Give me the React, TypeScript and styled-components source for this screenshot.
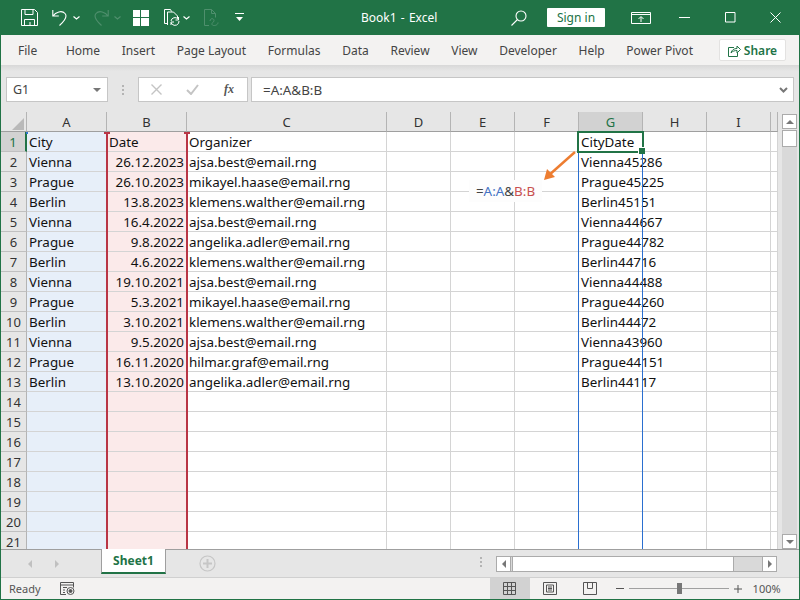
import React, { FC } from "react";
import styled, { createGlobalStyle } from "styled-components";

const GREEN = "#217346";

const GlobalStyle = createGlobalStyle`
  html, body { margin: 0; padding: 0; background: #fff; }
  * { box-sizing: border-box; }
  body { font-family: "Noto Sans", "Open Sans", sans-serif; }
`;

const rows: [string, string, string, string][] = [
  ["Vienna", "26.12.2023", "ajsa.best@email.rng", "Vienna45286"],
  ["Prague", "26.10.2023", "mikayel.haase@email.rng", "Prague45225"],
  ["Berlin", "13.8.2023", "klemens.walther@email.rng", "Berlin45151"],
  ["Vienna", "16.4.2022", "ajsa.best@email.rng", "Vienna44667"],
  ["Prague", "9.8.2022", "angelika.adler@email.rng", "Prague44782"],
  ["Berlin", "4.6.2022", "klemens.walther@email.rng", "Berlin44716"],
  ["Vienna", "19.10.2021", "ajsa.best@email.rng", "Vienna44488"],
  ["Prague", "5.3.2021", "mikayel.haase@email.rng", "Prague44260"],
  ["Berlin", "3.10.2021", "klemens.walther@email.rng", "Berlin44472"],
  ["Vienna", "9.5.2020", "ajsa.best@email.rng", "Vienna43960"],
  ["Prague", "16.11.2020", "hilmar.graf@email.rng", "Prague44151"],
  ["Berlin", "13.10.2020", "angelika.adler@email.rng", "Berlin44117"],
];

const columns = ["A", "B", "C", "D", "E", "F", "G", "H", "I", ""];
const tabs = ["Home", "Insert", "Page Layout", "Formulas", "Data", "Review", "View", "Developer", "Help", "Power Pivot"];

const Window = styled.div`
  width: 800px;
  height: 600px;
  display: flex;
  flex-direction: column;
  border: 1px solid ${GREEN};
  border-top: none;
  background: #e6e6e6;
  overflow: hidden;
`;

const TitleBar = styled.header`
  height: 35px;
  flex: none;
  display: flex;
  align-items: center;
  background: ${GREEN};
  color: #fff;
  position: relative;
  padding-left: 20px;
`;

const Slot = styled.span<{ $left?: number }>`
  display: inline-flex;
  align-items: center;
  flex: none;
  margin-left: ${(p) => p.$left ?? 0}px;
`;

const Title = styled.div`
  position: absolute;
  left: 360px;
  top: 9px;
  font-size: 12px;
  line-height: 17px;
  word-spacing: -1px;
  white-space: pre;
`;

const SignIn = styled.button`
  width: 58px;
  height: 19px;
  margin-left: 20px;
  padding: 0;
  border: none;
  border-radius: 1px;
  background: #fff;
  color: ${GREEN};
  font: 12px/19px "Noto Sans", sans-serif;
`;

const TabBar = styled.nav`
  height: 30px;
  flex: none;
  display: flex;
  align-items: center;
  gap: 21.7px;
  padding-left: 17px;
  background: #f3f2f1;
  color: #444;
  font-size: 12px;
`;

const Tab = styled.span<{ $file?: boolean }>`
  margin-right: ${(p) => (p.$file ? 7 : 0)}px;
  white-space: nowrap;
`;

const ShareButton = styled.button`
  position: absolute;
  left: 719px;
  top: 39px;
  width: 67px;
  height: 22px;
  display: flex;
  align-items: center;
  justify-content: center;
  gap: 3px;
  padding: 0;
  background: #fff;
  border: 1px solid #e3e2e1;
  border-radius: 2px;
  color: ${GREEN};
  font: 600 12px "Noto Sans", sans-serif;
`;

const FormulaBand = styled.div`
  height: 47px;
  flex: none;
  display: flex;
  align-items: flex-start;
  padding: 12px 5px 0 5px;
  background: linear-gradient(#d8d8d8, #e6e6e6 6px);
`;

const NameBox = styled.div`
  width: 102px;
  height: 25px;
  display: flex;
  align-items: center;
  justify-content: space-between;
  padding: 0 6px 0 6px;
  background: #fff;
  border: 1px solid #c6c6c6;
  color: #444;
  font-size: 12.500px;
`;

const Grip = styled.div`
  width: 2px;
  height: 10px;
  margin: 8px 14px 0 14px;
  background: repeating-linear-gradient(#b4b4b4 0 2px, transparent 2px 4px);
`;

const FormulaButtons = styled.div`
  width: 110px;
  height: 25px;
  display: flex;
  align-items: center;
  padding-left: 12px;
  background: #fff;
  border: 1px solid #c6c6c6;
`;

const FxLabel = styled.span`
  margin-left: 25px;
  color: #555;
  font: italic 700 12px "Liberation Serif", serif;
`;

const FormulaInput = styled.div`
  width: 543px;
  height: 25px;
  margin-left: 3px;
  display: flex;
  align-items: center;
  justify-content: space-between;
  padding: 0 5px 0 11px;
  background: #fff;
  border: 1px solid #c6c6c6;
  color: #444;
  font-size: 13.400px;
`;

const SheetArea = styled.div`
  height: 437px;
  flex: none;
  display: flex;
  overflow: hidden;
`;

const Sheet = styled.div`
  position: relative;
  width: 777px;
  flex: none;
  display: grid;
  grid-template-columns: 26px 80px 80px 200px repeat(6, 64px) 7px;
  grid-auto-rows: 20px;
  background: #fff;
  overflow: hidden;
`;

const Corner = styled.div`
  position: relative;
  background: #e6e6e6;
  border-right: 1px solid #b4b4b4;
  border-bottom: 1px solid #9f9f9f;
  &::after {
    content: "";
    position: absolute;
    right: 2px;
    bottom: 1px;
    border-style: solid;
    border-width: 0 0 12px 12px;
    border-color: transparent transparent #b9b9b9 transparent;
  }
`;

const ColHead = styled.div<{ $active?: boolean }>`
  display: flex;
  align-items: center;
  justify-content: center;
  background: ${(p) => (p.$active ? "#d2d2d2" : "#e6e6e6")};
  color: ${(p) => (p.$active ? GREEN : "#333")};
  border-right: 1px solid #b4b4b4;
  border-bottom: 1px solid #9f9f9f;
  font-size: 13px;
`;

const RowHead = styled.div<{ $active?: boolean }>`
  display: flex;
  align-items: center;
  justify-content: center;
  background: ${(p) => (p.$active ? "#d2d2d2" : "#e6e6e6")};
  color: ${(p) => (p.$active ? GREEN : "#333")};
  border-right: ${(p) => (p.$active ? `2px solid ${GREEN}` : "1px solid #b4b4b4")};
  border-bottom: 1px solid #c0c0c0;
  font-size: 13px;
`;

const tint = { none: "transparent", blue: "#e7eff9", red: "#fbeaea" };

const Cell = styled.div<{ $tone?: keyof typeof tint; $right?: boolean }>`
  display: flex;
  align-items: center;
  justify-content: ${(p) => (p.$right ? "flex-end" : "flex-start")};
  padding: 0 2px;
  background: ${(p) => tint[p.$tone ?? "none"]};
  border-right: 1px solid #d4d4d4;
  border-bottom: 1px solid #d4d4d4;
  color: #111;
  font-size: 13.400px;
  white-space: nowrap;
  min-width: 0;
`;

const RangeEdges = styled.div<{ $left: number; $width: number; $top: number; $color: string; $size: number }>`
  position: absolute;
  left: ${(p) => p.$left}px;
  width: ${(p) => p.$width}px;
  top: ${(p) => p.$top}px;
  bottom: 0;
  border-left: ${(p) => p.$size}px solid ${(p) => p.$color};
  border-right: ${(p) => p.$size}px solid ${(p) => p.$color};
  pointer-events: none;
`;

const RangeTick = styled.div<{ $left: number; $width: number; $color: string }>`
  position: absolute;
  left: ${(p) => p.$left}px;
  width: ${(p) => p.$width}px;
  top: 20px;
  height: 2px;
  background: ${(p) => p.$color};
`;

const Selection = styled.div`
  position: absolute;
  left: 576px;
  top: 19px;
  width: 67px;
  height: 22px;
  border: 2px solid ${GREEN};
  pointer-events: none;
  &::after {
    content: "";
    position: absolute;
    right: -3px;
    bottom: -3px;
    width: 6px;
    height: 6px;
    background: ${GREEN};
    border: 1px solid #fff;
    border-right: none;
    border-bottom: none;
  }
`;

const FormulaTag = styled.div`
  position: absolute;
  left: 468px;
  top: 68px;
  width: 73px;
  height: 22px;
  display: flex;
  align-items: center;
  justify-content: center;
  background: #fdfdfd;
  color: #444;
  font-size: 13.400px;
`;

const RefA = styled.span`
  color: #4472c4;
`;

const RefB = styled.span`
  color: #c8504f;
`;

const ArrowLayer = styled.svg`
  position: absolute;
  left: 539px;
  top: 38px;
`;

const VScroll = styled.aside`
  width: 21px;
  flex: none;
  display: flex;
  flex-direction: column;
  padding: 2px 2px 0 3px;
  background: #e6e6e6;
  border-left: 1px solid #e6e6e6;
`;

const ScrollButton = styled.div`
  flex: none;
  width: 15px;
  height: 15px;
  display: flex;
  align-items: center;
  justify-content: center;
  background: #fff;
  border: 1px solid #ababab;
`;

const VThumb = styled.div`
  width: 15px;
  height: 17px;
  margin-top: 1px;
  background: #fff;
  border: 1px solid #ababab;
`;

const VTrack = styled.div`
  flex: 1;
  margin: 0;
  background: #d9d9d9;
`;

const SheetBar = styled.div`
  height: 28px;
  flex: none;
  display: flex;
  align-items: flex-start;
  background: #e6e6e6;
  border-top: 1px solid #9f9f9f;
`;

const SheetNav = styled.div`
  width: 100px;
  height: 27px;
  display: flex;
  align-items: center;
  padding-left: 27px;
  gap: 23px;
`;

const SheetTab = styled.div`
  width: 65px;
  height: 25px;
  margin-top: -1px;
  display: flex;
  align-items: center;
  justify-content: center;
  background: #fff;
  border-left: 1px solid #9f9f9f;
  border-right: 1px solid #9f9f9f;
  border-bottom: 2px solid ${GREEN};
  color: ${GREEN};
  font-size: 12px;
  font-weight: 700;
`;

const AddSheet = styled.div`
  margin: 5px 0 0 33px;
  height: 17px;
  display: flex;
`;

const HScroll = styled.div`
  margin: 6px 0 0 280px;
  width: 281px;
  height: 16px;
  display: flex;
  background: #d9d9d9;
  border: 1px solid #ababab;
`;

const HGrip = styled.div`
  position: absolute;
  left: 480px;
  top: 557px;
  width: 2px;
  height: 10px;
  background: repeating-linear-gradient(#b4b4b4 0 2px, transparent 2px 4px);
`;

const HEnd = styled.div<{ $last?: boolean }>`
  width: 14px;
  display: flex;
  align-items: center;
  justify-content: center;
  background: #fff;
  margin-left: ${(p) => (p.$last ? "auto" : 0)};
  border-left: ${(p) => (p.$last ? "1px solid #ababab" : "none")};
  border-right: ${(p) => (p.$last ? "none" : "1px solid #ababab")};
`;

const HThumb = styled.div`
  width: 222px;
  margin-left: 1px;
  background: #fff;
  border-left: 1px solid #ababab;
  border-right: 1px solid #ababab;
`;

const StatusBar = styled.footer`
  flex: 1;
  display: flex;
  align-items: center;
  padding-left: 8px;
  background: #f3f2f1;
  border-top: 1px solid #d0d0d0;
  color: #555;
  font-size: 11px;
`;

const ViewButton = styled.div<{ $active?: boolean; $first?: boolean }>`
  width: 40px;
  align-self: stretch;
  margin-left: ${(p) => (p.$first ? 415 : 0)}px;
  display: flex;
  align-items: center;
  justify-content: center;
  background: ${(p) => (p.$active ? "#d2d2d2" : "transparent")};
`;

const ZoomSlider = styled.div`
  position: relative;
  width: 100px;
  height: 1px;
  margin: 0 5px;
  background: #a0a0a0;
  &::after {
    content: "";
    position: absolute;
    left: 48px;
    top: -5px;
    width: 5px;
    height: 11px;
    background: #777;
  }
`;

const ZoomLabel = styled.span`
  margin-left: 11px;
  color: #555;
`;

const SaveIcon = () => (
  <svg width="17" height="17" viewBox="0 0 17 17" fill="none" stroke="#fff">
    <path d="M.5.5h13l3 3v13H.5zM4 .5v5h8v-5M3.5 16.5v-6h10v6M9 13v3" />
  </svg>
);
const UndoIcon: FC<{ redo?: boolean }> = ({ redo }) => (
  <svg width="16" height="17" viewBox="0 0 16 17" fill="none" stroke={redo ? "#4f8f6d" : "#fff"} strokeWidth="1.1">
    <g transform={redo ? "matrix(-1 0 0 1 16 0)" : undefined}>
      <path d="M.8 1v6h6M1 7c2.5-4 9-6 12-2.500 3 3.500-1 8-5.500 12" />
    </g>
  </svg>
);
const Chevron: FC<{ color?: string }> = ({ color = "#fff" }) => (
  <svg width="7" height="4" viewBox="0 0 7 4" fill="none" stroke={color} strokeWidth="1.2">
    <path d="M.5.500l3 2.500 3-2.500" />
  </svg>
);
const FormIcon = () => (
  <svg width="16" height="16" viewBox="0 0 16 16" fill="#fff">
    <path d="M0 0h7v7H0zM8 0h8v7H8zM0 8h7v8H0zM8 8h8v8H8z" />
  </svg>
);
const PasteIcon = () => (
  <svg width="16" height="17" viewBox="0 0 16 17" fill="none" stroke="#fff">
    <path d="M3.500 14.500h-3V.500h6l1 2M3.500 16V3h6l4 4v2" />
    <path d="M7 12a4 4 0 0 1 7-2l1 1M15 12a4 4 0 0 1-7 3l-1-1M14.500 8v3h-3M7 16v-3h3" />
  </svg>
);
const DocIcon = () => (
  <svg width="15" height="17" viewBox="0 0 15 17" fill="none" stroke="#4f8f6d">
    <path d="M5 16.500H.5V.500h7l4 4v4M7.500.500v4h4" />
    <path d="M6 12c0-3 4-3 4-.500s-3 2-2 4 6 1 6-2" />
  </svg>
);
const CustomizeIcon = () => (
  <svg width="9" height="9" viewBox="0 0 9 9" fill="#fff">
    <path d="M0 0h9v1H0zM1 4h7L4.500 8z" />
  </svg>
);
const SearchIcon = () => (
  <svg width="16" height="16" viewBox="0 0 16 16" fill="none" stroke="#fff" strokeWidth="1.1">
    <circle cx="10" cy="6" r="5" />
    <path d="M6.500 9.500L.5 15.500" />
  </svg>
);
const RibbonIcon = () => (
  <svg width="21" height="12" viewBox="0 0 21 12" fill="none" stroke="#fff">
    <path d="M.5.500h19v11H.5zM.5 2.500h19M10 10V5M7.500 7L10 4.500 12.500 7" />
  </svg>
);
const MinIcon = () => (
  <svg width="11" height="1" viewBox="0 0 11 1"><path d="M0 0h11v1H0z" fill="#fff" /></svg>
);
const MaxIcon = () => (
  <svg width="11" height="11" viewBox="0 0 11 11" fill="none" stroke="#fff"><path d="M.5.500h9.500v9.500H.5z" /></svg>
);
const CloseIcon = () => (
  <svg width="11" height="11" viewBox="0 0 11 11" fill="none" stroke="#fff"><path d="M.5.500l10 10M10.500.500l-10 10" /></svg>
);
const ShareIcon = () => (
  <svg width="13" height="13" viewBox="0 0 13 13" fill="none" stroke={GREEN}>
    <path d="M6 3.500H.5v9h9V8" />
    <path d="M3 9c.5-3 3-4.500 6-4.500V2l3.500 3.500L9 9V6.500C7 6.500 4.500 7 3 9z" />
  </svg>
);
const CaretDown: FC<{ color?: string }> = ({ color = "#777" }) => (
  <svg width="8" height="4" viewBox="0 0 8 4" fill={color}><path d="M0 0h8L4 4z" /></svg>
);
const CaretUp = () => (
  <svg width="8" height="4" viewBox="0 0 8 4" fill="#777"><path d="M0 4h8L4 0z" /></svg>
);
const CaretSide: FC<{ right?: boolean; color?: string }> = ({ right, color = "#777" }) => (
  <svg width="4" height="8" viewBox="0 0 4 8" fill={color}>
    <path d={right ? "M0 0v8l4-4z" : "M4 0v8L0 4z"} />
  </svg>
);
const ChevronWide = () => (
  <svg width="9" height="6" viewBox="0 0 9 6" fill="none" stroke="#777" strokeWidth="2"><path d="M1 1l3.500 3.500L8 1" /></svg>
);
const CancelIcon = () => (
  <svg width="11" height="11" viewBox="0 0 11 11" fill="none" stroke="#c4c4c4" strokeWidth="1.4"><path d="M.5.500l10 10M10.500.500l-10 10" /></svg>
);
const CheckIcon = () => (
  <svg width="13" height="11" viewBox="0 0 13 11" fill="none" stroke="#c4c4c4" strokeWidth="2"><path d="M1 6l4 4 7-9" /></svg>
);
const PlusCircle = () => (
  <svg width="17" height="17" viewBox="0 0 17 17" fill="none" stroke="#c6c6c6">
    <circle cx="8.500" cy="8.500" r="7.500" strokeWidth="1.200" />
    <path d="M8.500 4v9M4 8.500h9" strokeWidth="2" />
  </svg>
);
const MacroIcon = () => (
  <svg width="15" height="13" viewBox="0 0 15 13" fill="none" stroke="#555">
    <path d="M6 12.500H.5V.500h13v5M.5 3h13M3 5.500h4M3 8h2M3 10.500h2" />
    <circle cx="10.500" cy="9" r="3.500" />
    <circle cx="10.500" cy="9" r="1.500" fill="#555" />
  </svg>
);
const NormalViewIcon = () => (
  <svg width="13" height="13" viewBox="0 0 13 13" fill="none" stroke="#555">
    <path d="M.5.500h12v12H.5zM4.500.500v12M8.500.500v12M.5 4.500h12M.5 8.500h12" />
  </svg>
);
const PageViewIcon = () => (
  <svg width="14" height="13" viewBox="0 0 14 13" fill="none" stroke="#555">
    <path d="M.5.500h13v12H.5zM3.500 3h7v7h-7zM5 5h4M5 6.500h4M5 8h4" />
  </svg>
);
const BreakViewIcon = () => (
  <svg width="14" height="13" viewBox="0 0 14 13" fill="none" stroke="#555">
    <path d="M.5.500h13v12H.5zM4.500.500v6h5v-6" />
  </svg>
);
const ZoomMinus = () => (
  <svg width="8" height="1" viewBox="0 0 8 1"><path d="M0 0h8v1H0z" fill="#555" /></svg>
);
const ZoomPlus = () => (
  <svg width="8" height="8" viewBox="0 0 8 8"><path d="M0 3.500h8v1H0zM3.500 0h1v8h-1z" fill="#555" /></svg>
);

const App: FC = () => (
  <>
    <GlobalStyle />
    <Window>
      <TitleBar>
        <Slot><SaveIcon /></Slot>
        <Slot $left={14}><UndoIcon /></Slot>
        <Slot $left={5}><Chevron /></Slot>
        <Slot $left={13}><UndoIcon redo /></Slot>
        <Slot $left={5}><Chevron color="#4f8f6d" /></Slot>
        <Slot $left={12}><FormIcon /></Slot>
        <Slot $left={15}><PasteIcon /></Slot>
        <Slot $left={3}><Chevron /></Slot>
        <Slot $left={14}><DocIcon /></Slot>
        <Slot $left={16}><CustomizeIcon /></Slot>
        <Title>Book1  -  Excel</Title>
        <Slot $left={267}><SearchIcon /></Slot>
        <SignIn>Sign in</SignIn>
        <Slot $left={26}><RibbonIcon /></Slot>
        <Slot $left={27}><MinIcon /></Slot>
        <Slot $left={35}><MaxIcon /></Slot>
        <Slot $left={34}><CloseIcon /></Slot>
      </TitleBar>
      <TabBar>
        <Tab $file>File</Tab>
        {tabs.map((t) => (
          <Tab key={t}>{t}</Tab>
        ))}
      </TabBar>
      <ShareButton>
        <ShareIcon />
        Share
      </ShareButton>
      <FormulaBand>
        <NameBox>
          G1
          <CaretDown />
        </NameBox>
        <Grip />
        <FormulaButtons>
          <CancelIcon />
          <Slot $left={24}><CheckIcon /></Slot>
          <FxLabel>fx</FxLabel>
        </FormulaButtons>
        <FormulaInput>
          =A:A&amp;B:B
          <ChevronWide />
        </FormulaInput>
      </FormulaBand>
      <SheetArea>
        <Sheet>
          <Corner />
          {columns.map((c, i) => (
            <ColHead key={i} $active={c === "G"}>{c}</ColHead>
          ))}
          {Array.from({ length: 21 }, (_, r) => {
            const row = r === 0 ? ["City", "Date", "Organizer", "CityDate"] : rows[r - 1] ?? ["", "", "", ""];
            return (
              <React.Fragment key={r}>
                <RowHead $active={r === 0}>{r + 1}</RowHead>
                <Cell $tone="blue">{row[0]}</Cell>
                <Cell $tone="red" $right={r > 0}>{row[1]}</Cell>
                <Cell>{row[2]}</Cell>
                <Cell />
                <Cell />
                <Cell />
                <Cell>{row[3]}</Cell>
                <Cell />
                <Cell />
                <Cell />
              </React.Fragment>
            );
          })}
          <RangeEdges $left={105} $width={82} $top={20} $color="#b93545" $size={2} />
          <RangeTick $left={103} $width={6} $color="#b93545" />
          <RangeTick $left={183} $width={6} $color="#b93545" />
          <RangeTick $left={25} $width={2} $color="#2f75d0" />
          <RangeEdges $left={577} $width={65} $top={40} $color="#2a6fd0" $size={1} />
          <Selection />
          <FormulaTag>
            =<RefA>A:A</RefA>&amp;<RefB>B:B</RefB>
          </FormulaTag>
          <ArrowLayer width="40" height="36" viewBox="0 0 40 36">
            <path d="M35 2L8 26" stroke="#ed7d31" strokeWidth="2.400" fill="none" />
            <path d="M4 30l3-11 8 8z" fill="#ed7d31" />
          </ArrowLayer>
        </Sheet>
        <VScroll>
          <ScrollButton><CaretUp /></ScrollButton>
          <VThumb />
          <VTrack />
          <ScrollButton><CaretDown /></ScrollButton>
        </VScroll>
      </SheetArea>
      <SheetBar>
        <SheetNav>
          <CaretSide color="#c0c0c0" />
          <CaretSide right color="#c0c0c0" />
        </SheetNav>
        <SheetTab>Sheet1</SheetTab>
        <AddSheet><PlusCircle /></AddSheet>
        <HScroll>
          <HEnd><CaretSide /></HEnd>
          <HThumb />
          <HEnd $last><CaretSide right /></HEnd>
        </HScroll>
      </SheetBar>
      <HGrip />
      <StatusBar>
        Ready
        <Slot $left={19}><MacroIcon /></Slot>
        <ViewButton $active $first><NormalViewIcon /></ViewButton>
        <ViewButton><PageViewIcon /></ViewButton>
        <ViewButton><BreakViewIcon /></ViewButton>
        <Slot $left={6}><ZoomMinus /></Slot>
        <ZoomSlider />
        <ZoomPlus />
        <ZoomLabel>100%</ZoomLabel>
      </StatusBar>
    </Window>
  </>
);

export default App;
